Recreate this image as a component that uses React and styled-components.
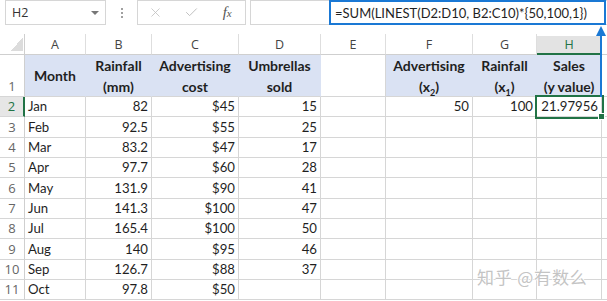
import React from 'react'
import styled, { createGlobalStyle } from 'styled-components'
import { X, Check } from 'lucide-react'

const GlobalStyle = createGlobalStyle`
	html, body {
		margin: 0;
		padding: 0;
		background: #fff;
	}
	body {
		overflow: hidden;
	}
`

const GRID = '#d6d6d6'
const GREEN = '#217346'
const HEAD_FILL = '#dae2f3'

const Sheet = styled.div`
	position: relative;
	width: 607px;
	height: 301px;
	overflow: hidden;
	background: #fff;
	font-family: Lato, "Liberation Sans", sans-serif;
	color: #1f1f1f;
`

const FormulaBar = styled.div`
	display: flex;
	align-items: stretch;
	height: 25px;
	padding-left: 5px;
`

const NameBox = styled.div`
	box-sizing: border-box;
	width: 101px;
	border: 1px solid ${GRID};
	display: flex;
	align-items: center;
	justify-content: space-between;
	padding: 0 6px;
	font-family: "Open Sans", sans-serif;
	font-size: 12.5px;
	color: #333;
`

const Caret = styled.span`
	width: 0;
	height: 0;
	border-left: 4px solid transparent;
	border-right: 4px solid transparent;
	border-top: 4px solid #777;
`

const Dots = styled.div`
	width: 31px;
	display: flex;
	flex-direction: column;
	align-items: center;
	justify-content: center;
	gap: 2px;
	span {
		width: 2px;
		height: 2px;
		background: #a0a0a0;
	}
`

const FxBox = styled.div`
	box-sizing: border-box;
	width: 109px;
	border: 1px solid ${GRID};
	display: flex;
	align-items: center;
`

const FxSlot = styled.div`
	width: 36px;
	display: flex;
	justify-content: center;
	align-items: center;
	color: ${p => p.$dim ? '#c0c0c0' : '#555'};
`

const FxLabel = styled.span`
	font-family: "Liberation Serif", serif;
	font-style: italic;
	font-size: 15px;
	color: #555;
	small {
		font-size: 11px;
	}
`

const FormulaInput = styled.div`
	flex: 1;
	margin-left: 4px;
	border: 1px solid ${GRID};
	border-right: none;
	display: flex;
	justify-content: flex-end;
`

const Highlight = styled.div`
	box-sizing: border-box;
	width: 277px;
	margin: -1px 1px -1px 0;
	border: 2px solid #1a78d4;
	display: flex;
	align-items: center;
	padding-left: 4px;
	font-size: 13px;
	color: #1f1f1f;
	white-space: nowrap;
`

const Grid = styled.div`
	margin-top: 9px;
	display: grid;
	grid-template-columns: 25px 61px 66px 87px 82px 65px 87px 64px 65px 1fr;
	grid-template-rows: 21px 42px repeat(10, 20.33px);
`

const Corner = styled.div`
	box-sizing: border-box;
	border-right: 1px solid #cfcfcf;
	border-bottom: 1px solid #cfcfcf;
	background-image: linear-gradient(to top left, #dcdcdc 50%, transparent 50%);
	background-size: 12px 14px;
	background-repeat: no-repeat;
	background-position: right 1px bottom 3px;
`

const ColHead = styled.div`
	box-sizing: border-box;
	display: flex;
	align-items: center;
	justify-content: center;
	font-family: "Open Sans", sans-serif;
	font-size: 12.5px;
	color: ${p => p.$active ? GREEN : '#444'};
	background: ${p => p.$active ? '#e3e3e3' : '#fff'};
	border-right: 1px solid #dedede;
	border-bottom: ${p => p.$active ? `2px solid ${GREEN}` : '1px solid #cfcfcf'};
	margin-top: ${p => p.$active ? '2px' : '0'};
`

const RowHead = styled.div`
	box-sizing: border-box;
	display: flex;
	align-items: flex-end;
	justify-content: center;
	padding-bottom: 1px;
	font-family: "Open Sans", sans-serif;
	font-size: 13px;
	line-height: 18px;
	color: ${p => p.$active ? GREEN : '#666'};
	background: ${p => p.$active ? '#e6e6e6' : '#fff'};
	border-right: ${p => p.$active ? `2px solid ${GREEN}` : '1px solid #cfcfcf'};
	border-bottom: 1px solid ${GRID};
`

const TitleCell = styled.div`
	box-sizing: border-box;
	display: flex;
	flex-direction: column;
	align-items: center;
	justify-content: center;
	background: ${p => p.$filled ? HEAD_FILL : '#fff'};
	border-right: 1px solid ${p => p.$filled ? HEAD_FILL : GRID};
	border-bottom: 1px solid ${GRID};
	font-weight: 700;
	font-size: 14px;
	line-height: 21px;
	white-space: nowrap;
	sub {
		font-size: 9px;
		line-height: 0;
	}
`

const Cell = styled.div`
	position: relative;
	box-sizing: border-box;
	display: flex;
	align-items: flex-end;
	justify-content: ${p => p.$right ? 'flex-end' : 'flex-start'};
	padding: 0 3px 1px;
	font-size: 13.2px;
	line-height: 18px;
	white-space: nowrap;
	border-right: 1px solid ${GRID};
	border-bottom: 1px solid ${GRID};
	${p => p.$selected && `
		outline: 2px solid ${GREEN};
		outline-offset: 0px;
		z-index: 1;
		&::after {
			content: '';
			position: absolute;
			right: -4px;
			bottom: -4px;
			width: 5px;
			height: 5px;
			background: ${GREEN};
			border: 1px solid #fff;
		}
	`}
`

const Arrow = styled.svg`
	position: absolute;
	left: 595px;
	top: 25px;
	z-index: 3;
`

const Watermark = styled.div`
	position: absolute;
	left: 477px;
	top: 264px;
	font-family: "Noto Sans CJK SC", sans-serif;
	font-size: 17px;
	color: #c4c4c4;
	letter-spacing: 0.8px;
	text-shadow: 1px 0 0 #fff, -1px 0 0 #fff, 0 1px 0 #fff, 0 -1px 0 #fff;
`

const cols = ['A', 'B', 'C', 'D', 'E', 'F', 'G', 'H', '']

const rows = [
	['Jan', '82', '$45', '15'],
	['Feb', '92.5', '$55', '25'],
	['Mar', '83.2', '$47', '17'],
	['Apr', '97.7', '$60', '28'],
	['May', '131.9', '$90', '41'],
	['Jun', '141.3', '$100', '47'],
	['Jul', '165.4', '$100', '50'],
	['Aug', '140', '$95', '46'],
	['Sep', '126.7', '$88', '37'],
	['Oct', '97.8', '$50', ''],
]

export default function App() {
	return (
		<Sheet>
			<GlobalStyle />
			<FormulaBar>
				<NameBox>H2<Caret /></NameBox>
				<Dots><span /><span /><span /></Dots>
				<FxBox>
					<FxSlot $dim><X size={15} strokeWidth={1.3} /></FxSlot>
					<FxSlot $dim><Check size={15} strokeWidth={1.6} /></FxSlot>
					<FxSlot><FxLabel>f<small>x</small></FxLabel></FxSlot>
				</FxBox>
				<FormulaInput>
					<Highlight>=SUM(LINEST(D2:D10, B2:C10)*{'{'}50,100,1{'}'})</Highlight>
				</FormulaInput>
			</FormulaBar>

			<Grid>
				<Corner />
				{cols.map((c, i) => (
					<ColHead key={i} $active={c === 'H'}>{c}</ColHead>
				))}

				<RowHead>1</RowHead>
				<TitleCell $filled>Month</TitleCell>
				<TitleCell $filled><span>Rainfall</span><span>(mm)</span></TitleCell>
				<TitleCell $filled><span>Advertising</span><span>cost</span></TitleCell>
				<TitleCell $filled><span>Umbrellas</span><span>sold</span></TitleCell>
				<TitleCell />
				<TitleCell $filled><span>Advertising</span><span>(x<sub>2</sub>)</span></TitleCell>
				<TitleCell $filled><span>Rainfall</span><span>(x<sub>1</sub>)</span></TitleCell>
				<TitleCell $filled><span>Sales</span><span>(y value)</span></TitleCell>
				<TitleCell />

				{rows.map((r, i) => (
					<React.Fragment key={i}>
						<RowHead $active={i === 0}>{i + 2}</RowHead>
						<Cell>{r[0]}</Cell>
						<Cell $right>{r[1]}</Cell>
						<Cell $right>{r[2]}</Cell>
						<Cell $right>{r[3]}</Cell>
						<Cell />
						<Cell $right>{i === 0 ? '50' : ''}</Cell>
						<Cell $right>{i === 0 ? '100' : ''}</Cell>
						<Cell $right $selected={i === 0}>{i === 0 ? '21.97956' : ''}</Cell>
						<Cell />
					</React.Fragment>
				))}
			</Grid>

			<Arrow width="12" height="72" viewBox="0 0 12 72">
				<line x1="6" y1="8" x2="6" y2="72" stroke="#1a78d4" strokeWidth="2" />
				<polygon points="6,1 1,11 11,11" fill="#1a78d4" />
			</Arrow>

			<Watermark>知乎 @有数么</Watermark>
		</Sheet>
	)
}
